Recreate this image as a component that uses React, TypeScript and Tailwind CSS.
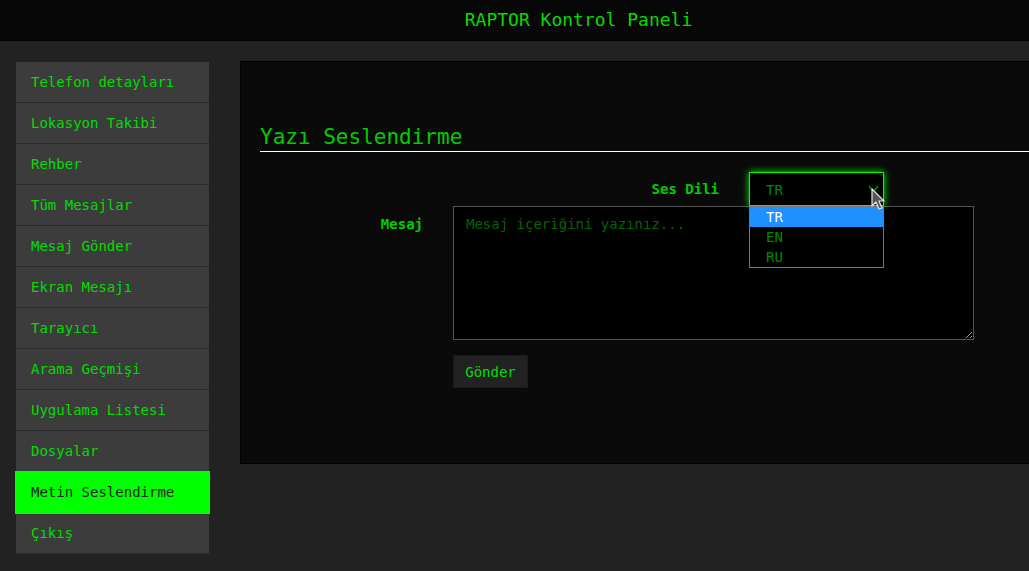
import React from 'react';

const menu = [
  'Telefon detayları',
  'Lokasyon Takibi',
  'Rehber',
  'Tüm Mesajlar',
  'Mesaj Gönder',
  'Ekran Mesajı',
  'Tarayıcı',
  'Arama Geçmişi',
  'Uygulama Listesi',
  'Dosyalar',
  'Metin Seslendirme',
  'Çıkış',
];

const App = () => {
  const active = 'Metin Seslendirme';

  return (
    <div className="w-[1029px] h-[571px] overflow-hidden bg-[#222222] font-['DejaVu_Sans_Mono',monospace]">
      <div className="w-[1157px]">
        {/* Header */}
        <header className="h-[41px] bg-[#070707] border-b border-black pt-[6px] text-center text-[18px] text-[#00dd00]">
          RAPTOR Kontrol Paneli
        </header>

        <div className="flex pt-[20px] pl-[16px] pr-[16px]">
          {/* Sidebar */}
          <nav className="w-[193px] shrink-0 mt-[1px] flex flex-col">
            {menu.map((item) => (
              <div
                key={item}
                className={
                  item === active
                    ? 'h-[41px] flex items-center pl-[15px] pb-px text-[14px] bg-[#00ff00] text-[#1c1c1c] outline-1 outline-solid outline-[#00ff00] relative'
                    : 'h-[41px] flex items-center pl-[15px] text-[14px] bg-[#3c3c3c] text-[#00dd00] border-b border-[#2a2a2a]'
                }
              >
                {item}
              </div>
            ))}
          </nav>

          {/* Main panel */}
          <main className="ml-[31px] flex-1 h-[403px] bg-[#0a0a0a] border border-black pl-[19px] relative">
            <h2 className="mt-[63px] text-[21px] leading-[24px] text-[#00cc00] border-b border-white pb-[2px]">
              Yazı Seslendirme
            </h2>

            <div className="mt-[20px] flex items-center">
              <label className="w-[459px] text-right text-[14px] font-bold text-[#00cc00]">Ses Dili</label>
              <div className="ml-[30px] relative">
                <div className="w-[135px] h-[34px] bg-black border border-[#00ff00] shadow-[0_0_7px_#00ff00] flex items-center pl-[16px] pt-[2px] text-[14px] text-[#008800]">
                  TR
                  <svg className="absolute right-[5px] top-[13px]" width="11" height="8" viewBox="0 0 11 8">
                    <path d="M1 1 L5.5 6.5 L10 1" fill="none" stroke="#008800" strokeWidth="1.8" />
                  </svg>
                </div>
                <ul className="absolute left-0 top-[34px] w-[135px] bg-black border border-[#777777] z-10 text-[14px]">
                  <li className="h-[20px] flex items-center pl-[16px] bg-[#1e90ff] text-white">TR</li>
                  <li className="h-[20px] flex items-center pl-[16px] text-[#008800]">EN</li>
                  <li className="h-[20px] flex items-center pl-[16px] text-[#008800]">RU</li>
                </ul>
                {/* mouse cursor */}
                <svg className="absolute left-[122px] top-[16px] z-20" width="16" height="24" viewBox="0 0 16 24">
                  <path
                    d="M1 1 L1 18 L5 14 L8 21 L11 20 L8 13 L13 13 Z"
                    fill="#555555"
                    stroke="#e5e5e5"
                    strokeWidth="1.2"
                    strokeLinejoin="round"
                  />
                </svg>
              </div>
            </div>

            <div className="flex items-start">
              <label className="w-[163px] text-right text-[14px] font-bold text-[#00cc00] pt-[8px]">Mesaj</label>
              <textarea
                className="ml-[30px] w-[521px] h-[134px] bg-black border border-[#555555] px-[12px] pt-[7px] text-[14px] text-[#00cc00] placeholder:text-[#006600] outline-none"
                placeholder="Mesaj içeriğini yazınız..."
              />
            </div>

            <div className="pl-[193px] mt-[15px]">
              <button className="w-[75px] h-[33px] bg-[#222222] border border-[#1a1a1a] pt-px text-[14px] text-[#00dd00]">
                Gönder
              </button>
            </div>
          </main>
        </div>
      </div>
    </div>
  );
};

export default App;
